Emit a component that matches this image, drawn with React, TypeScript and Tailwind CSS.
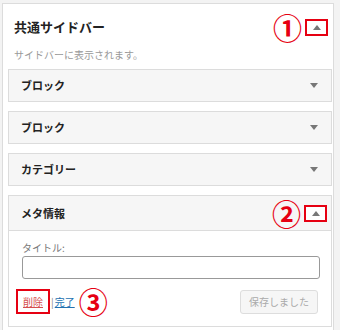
import React from 'react'

const font = { fontFamily: '"Noto Sans CJK JP", "Noto Sans", sans-serif' }

function Arrow({ up = false }: { up?: boolean }) {
  return (
    <svg width="8" height="5" viewBox="0 0 8 5" className="block">
      {up ? <polygon points="0,5 8,5 4,0" fill="#777" /> : <polygon points="0,0 8,0 4,5" fill="#777" />}
    </svg>
  )
}

function Marked({ n }: { n: string }) {
  return (
    <div className="flex h-[24px] items-center gap-[3px]">
      <span className="text-[29px] leading-none font-bold text-[#e60012]">{n}</span>
      <span className="flex h-[17px] w-[23px] items-center justify-center border-2 border-[#e60012] bg-white">
        <Arrow up />
      </span>
    </div>
  )
}

function Widget({ title }: { title: string }) {
  return (
    <div className="flex h-[33px] items-center justify-between border border-[#dcdcdc] bg-[#f6f6f6] pl-[12px] pr-[13px]">
      <span className="text-[11px] font-bold text-[#222]">{title}</span>
      <Arrow />
    </div>
  )
}

export default function App() {
  return (
    <div className="h-[330px] w-[340px] overflow-hidden bg-[#f3f3f3]" style={font}>
      <div className="ml-[2px] mt-[3px] h-[340px] w-[332px] border border-[#dcdcdc] bg-white">
        <div className="flex items-center justify-between pl-[11px] pr-[5px] pt-[11px]">
          <span className="text-[13px] font-bold text-[#222]">共通サイドバー</span>
          <Marked n="①" />
        </div>
        <div className="pl-[11px] pt-[8px] text-[10px] text-[#999]">サイドバーに表示されます。</div>
        <div className="ml-[5px] mr-[1px] mt-[7px] flex flex-col gap-[9px]">
          <Widget title="ブロック" />
          <Widget title="ブロック" />
          <Widget title="カテゴリー" />
          <div className="border border-[#dcdcdc] bg-white">
            <div className="flex h-[35px] items-center justify-between border-b border-[#dcdcdc] bg-[#f6f6f6] pl-[12px] pr-[4px]">
              <span className="text-[11px] font-bold text-[#222]">メタ情報</span>
              <Marked n="②" />
            </div>
            <div className="px-[13px] pb-[10px] pt-[9px]">
              <div className="text-[10px] text-[#777]">タイトル:</div>
              <div className="mt-[1px] h-[23px] w-[298px] rounded-[3px] border border-[#999] bg-white" />
              <div className="mt-[8px] flex items-center justify-between">
                <div className="flex items-center">
                  <span className="-ml-[6px] border-2 border-[#e60012] px-[5px] py-[4px] text-[10px] leading-[13px] text-[#d54e4e] underline">削除</span>
                  <span className="ml-[1px] text-[10px] text-[#888]">|</span>
                  <span className="ml-[1px] text-[10px] text-[#2271b1] underline">完了</span>
                  <span className="ml-[4px] text-[29px] leading-none font-bold text-[#e60012]">③</span>
                </div>
                <div className="flex h-[24px] items-center rounded-[3px] border border-[#ddd] bg-[#f6f6f6] px-[8px] text-[10px] text-[#aaa]">
                  保存しました
                </div>
              </div>
            </div>
          </div>
        </div>
      </div>
    </div>
  )
}
